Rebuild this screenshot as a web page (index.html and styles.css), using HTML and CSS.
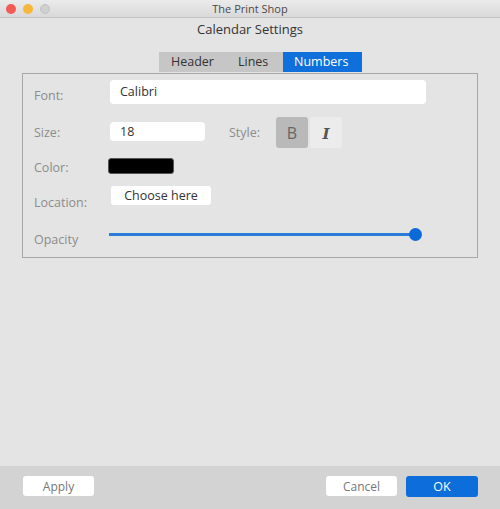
FILE: index.html
```html
<!DOCTYPE html>
<html lang="en">
<head>
  <meta charset="UTF-8">
  <title>Calendar Settings</title>
  <link rel="stylesheet" href="styles.css">
</head>
<body>
  <div class="window">
    <div class="titlebar">
      <div class="lights">
        <span class="light red"></span>
        <span class="light yellow"></span>
        <span class="light gray"></span>
      </div>
      <div class="title">The Print Shop</div>
    </div>

    <div class="dialog-title">Calendar Settings</div>

    <div class="tabs">
      <span class="tab tab-header">Header</span>
      <span class="tab tab-lines">Lines</span>
      <span class="tab active">Numbers</span>
    </div>

    <div class="panel">
      <div class="row row-font">
        <label class="label">Font:</label>
        <div class="input wide">Calibri</div>
      </div>
      <div class="row row-size">
        <label class="label">Size:</label>
        <div class="input small">18</div>
        <label class="label style-label">Style:</label>
        <button class="toggle on">B</button>
        <button class="toggle"><i>I</i></button>
      </div>
      <div class="row row-color">
        <label class="label">Color:</label>
        <div class="swatch"></div>
      </div>
      <div class="row row-location">
        <label class="label">Location:</label>
        <button class="choose">Choose here</button>
      </div>
      <div class="row row-opacity">
        <label class="label">Opacity</label>
        <div class="slider">
          <div class="track"></div>
          <div class="thumb"></div>
        </div>
      </div>
    </div>

    <div class="spacer"></div>

    <div class="footer">
      <button class="btn">Apply</button>
      <div class="footer-right">
        <button class="btn">Cancel</button>
        <button class="btn primary">OK</button>
      </div>
    </div>
  </div>
</body>
</html>
```

FILE: styles.css
```css
* {
  box-sizing: border-box;
}
html, body {
  margin: 0;
  height: 100%;
}
body {
  font-family: "Open Sans", "DejaVu Sans", sans-serif;
  background: #e4e4e4;
  color: #333;
}
.window {
  display: flex;
  flex-direction: column;
  height: 509px;
}

/* title bar */
.titlebar {
  position: relative;
  height: 18px;
  background: linear-gradient(#ebebeb, #d9d9d9);
  border-bottom: 1px solid #c4c4c4;
  display: flex;
  align-items: center;
  justify-content: center;
}
.lights {
  position: absolute;
  left: 6px;
  top: 4px;
  display: flex;
  gap: 7px;
}
.light {
  width: 10px;
  height: 10px;
  border-radius: 50%;
}
.light.red { background: #f25a55; }
.light.yellow { background: #f6b73b; }
.light.gray { background: #d0d0d0; border: 1px solid #c2c2c2; }
.title {
  font-size: 11px;
  color: #4a4a4a;
}

.dialog-title {
  text-align: center;
  font-size: 13px;
  color: #333;
  margin-top: 2px;
  line-height: 18px;
}

/* tabs */
.tabs {
  display: flex;
  margin: 14px 0 0 159px;
  height: 20px;
  background: #c6c6c6;
  align-self: flex-start;
}
.tab {
  font-size: 12.5px;
  line-height: 20px;
  color: #333;
  padding-left: 12px;
}
.tab-header { width: 67px; }
.tab-lines { width: 57px; }
.tab.active {
  width: 79px;
  background: #0f6fdb;
  color: #fff;
  padding-left: 11px;
}

/* settings panel */
.panel {
  margin: 1px 22px 0 22px;
  border: 1px solid #a8a8a8;
  height: 185px;
  padding: 6px 0 0 11px;
}
.row {
  display: flex;
  align-items: flex-start;
}
.label {
  width: 76px;
  font-size: 12.5px;
  color: #8c8c8c;
}
.row-font { height: 24px; }
.row-font .label { margin-top: 7px; }
.input {
  background: #fff;
  border-radius: 4px;
  font-size: 12.5px;
  color: #333;
  padding-left: 10px;
}
.input.wide {
  width: 316px;
  height: 24px;
  line-height: 24px;
}
.row-size {
  margin-top: 13px;
  height: 31px;
}
.row-size .label { margin-top: 7px; }
.input.small {
  margin-top: 5px;
  width: 95px;
  height: 19px;
  line-height: 19px;
}
.label.style-label {
  width: auto;
  margin-left: 24px;
  margin-right: 16px;
}
.toggle {
  width: 32px;
  height: 31px;
  border: 0;
  border-radius: 3px;
  background: #ececec;
  color: #555;
  font-family: "Open Sans", sans-serif;
  font-size: 16px;
  margin-right: 2px;
  padding: 0;
}
.toggle.on {
  background: #b9b9b9;
  color: #666;
}
.toggle i {
  font-family: "DejaVu Serif", serif;
  font-weight: bold;
  font-size: 15px;
}
.row-color {
  margin-top: 10px;
  height: 16px;
}
.row-color .label { margin-top: 1px; width: 74px; }
.swatch {
  width: 66px;
  height: 16px;
  background: #000;
  border-radius: 3px;
  border: 1px solid #555;
}
.row-location {
  margin-top: 12px;
  height: 19px;
}
.row-location .label { margin-top: 8px; width: 77px; }
.choose {
  width: 100px;
  height: 19px;
  border: 0;
  border-radius: 3px;
  background: #fff;
  font-family: "Open Sans", sans-serif;
  font-size: 12.5px;
  color: #333;
  padding: 0;
}
.row-opacity {
  margin-top: 23px;
  height: 22px;
}
.row-opacity .label { margin-top: 3px; width: 75px; }
.slider {
  position: relative;
  width: 312px;
  height: 12px;
  margin-top: 2px;
}
.track {
  margin-top: 3px;
  width: 306px;
  height: 3px;
  background: #2a7ad6;
}
.thumb {
  position: absolute;
  left: 300px;
  top: -2px;
  width: 13px;
  height: 13px;
  border-radius: 50%;
  background: #0c6ad8;
}

.spacer {
  flex: 1;
}

/* bottom button bar */
.footer {
  height: 43px;
  background: #d3d3d3;
  display: flex;
  justify-content: space-between;
  align-items: flex-start;
  padding: 10px 22px 0 23px;
}
.footer-right {
  display: flex;
  gap: 9px;
}
.btn {
  width: 71px;
  height: 20px;
  border: 0;
  border-radius: 3px;
  background: #fff;
  font-family: "Open Sans", sans-serif;
  font-size: 12px;
  color: #777;
  padding: 0;
}
.btn.primary {
  width: 72px;
  height: 21px;
  background: #0c6ddb;
  color: #fff;
  font-size: 12.5px;
}
```
